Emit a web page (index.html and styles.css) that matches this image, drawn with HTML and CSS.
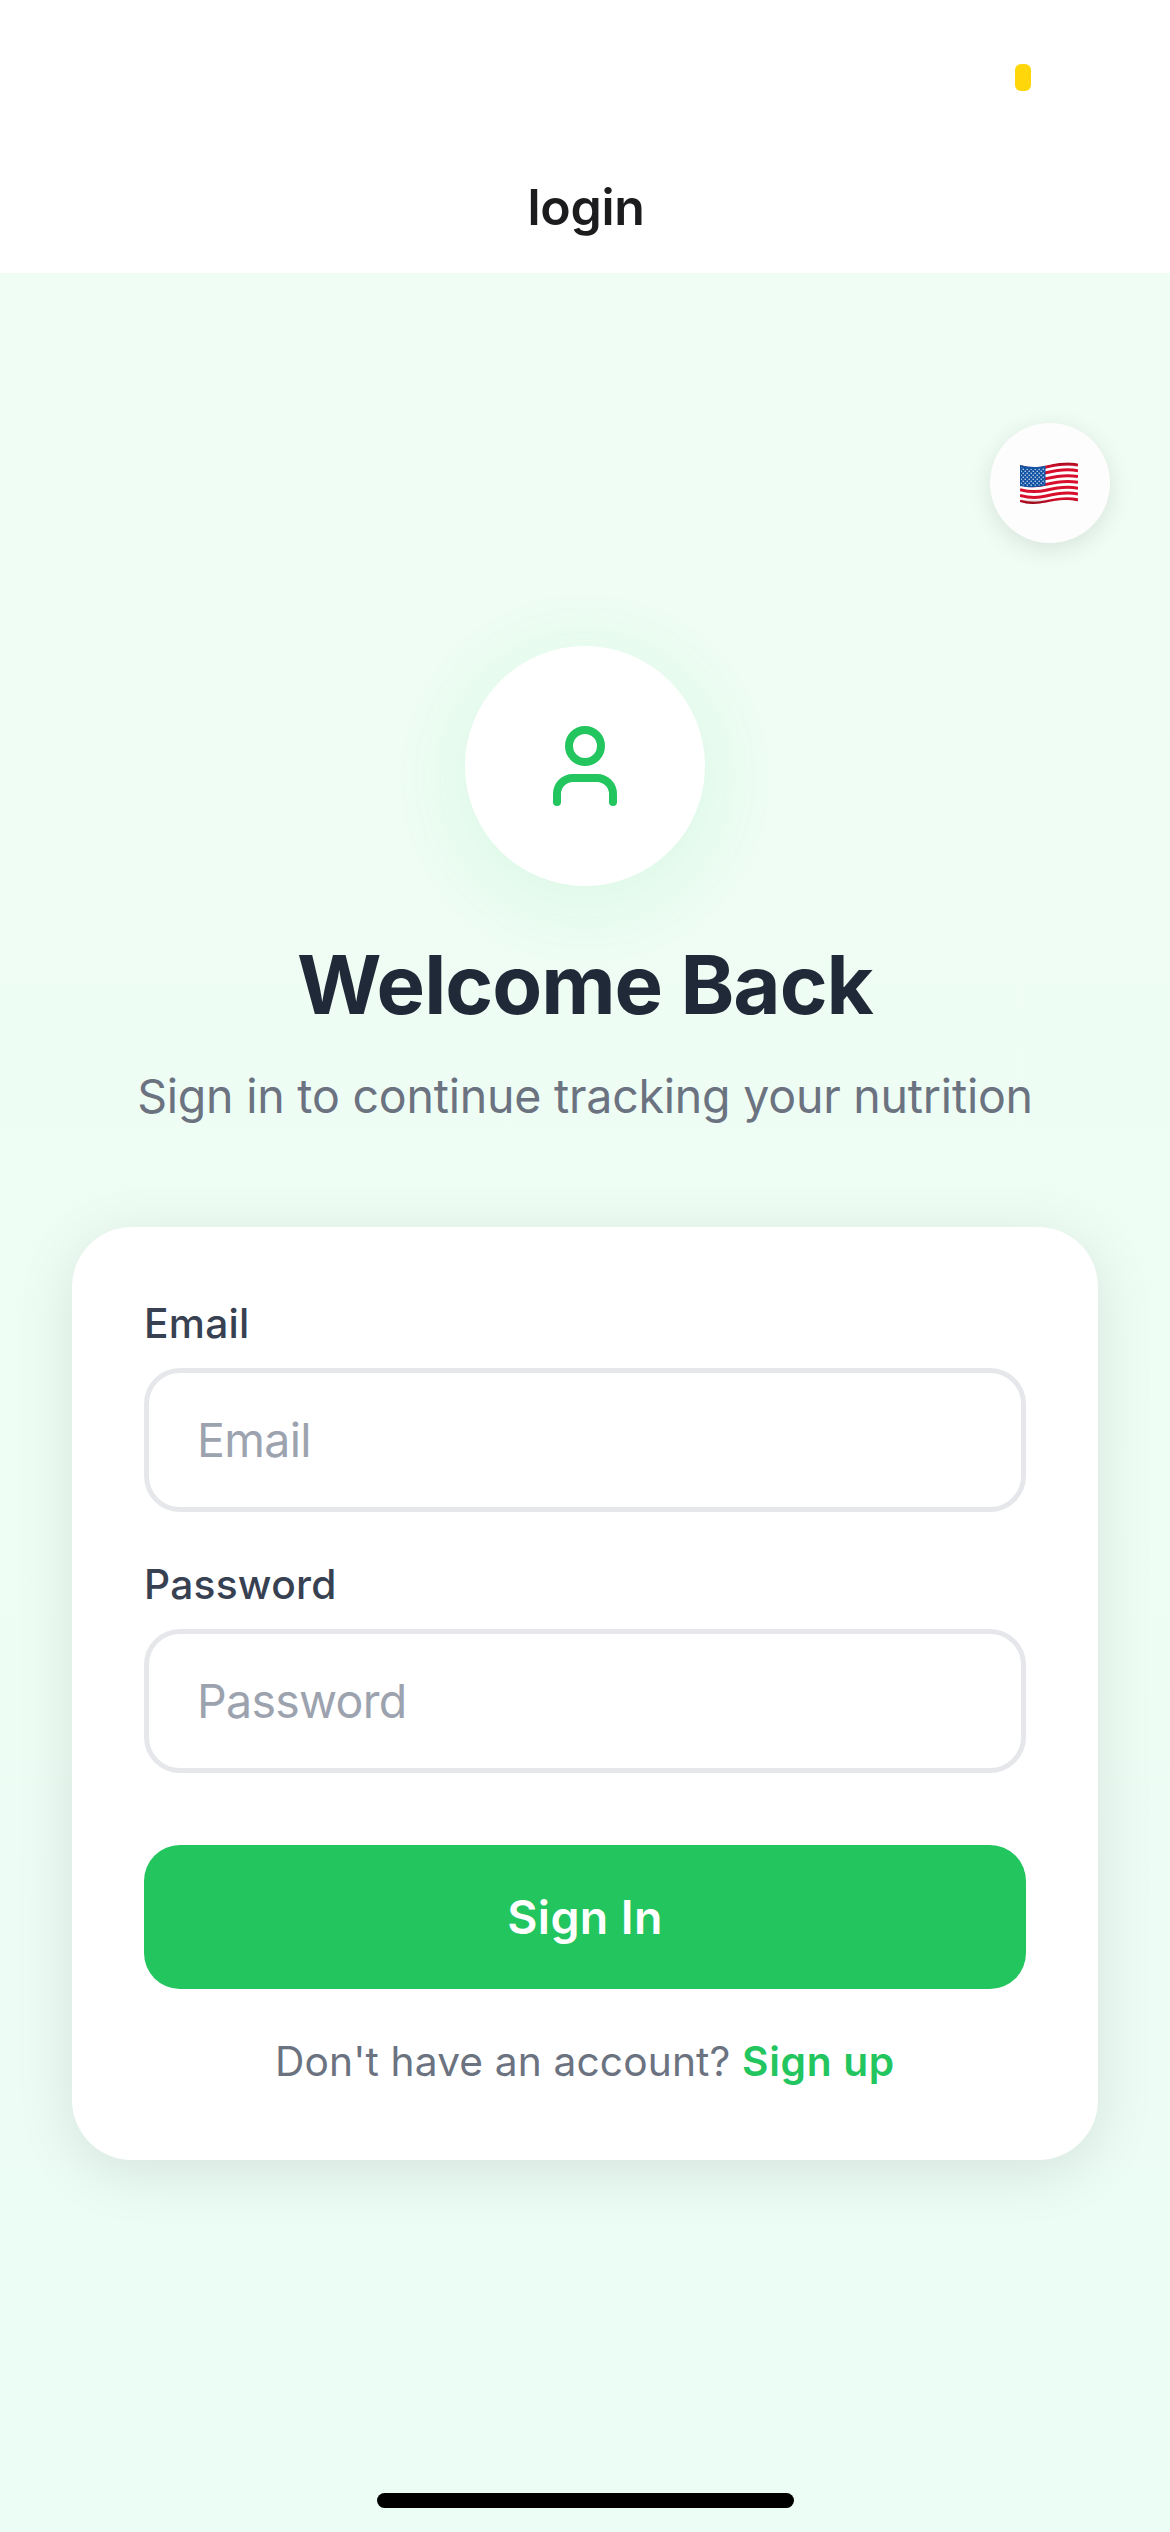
FILE: index.html
```html
<!DOCTYPE html>
<html lang="en">
<head>
<meta charset="utf-8">
<title>login</title>
<link rel="stylesheet" href="styles.css">
</head>
<body>
<div class="screen">
  <header class="header">
    <div class="status-bar"><span class="status-pill"></span></div>
    <h1 class="nav-title">login</h1>
  </header>
  <main class="content">
    <div class="toolbar">
      <button class="lang-button" type="button" aria-label="Language">
        <svg class="flag" viewBox="0 0 58 42">
          <defs>
            <clipPath id="wave"><path d="M0 3C8 5 16 6 26 3.500C38 .5 48 -.5 58 1.500V39.500C48 37 38 37.500 26 40.500C16 42.500 8 42.500 0 40Z"/></clipPath>
            <pattern id="stars" width="4" height="4" patternUnits="userSpaceOnUse"><circle cx="1.200" cy="1.200" r=".75"/><circle cx="3.200" cy="3.200" r=".75"/></pattern>
            <linearGradient id="shade" x1="0" y1="0" x2="0" y2="1"><stop offset="0" stop-color="#300" stop-opacity=".35"/><stop offset=".12" stop-color="#300" stop-opacity="0"/><stop offset=".88" stop-color="#300" stop-opacity="0"/><stop offset="1" stop-color="#300" stop-opacity=".45"/></linearGradient>
          </defs>
          <g clip-path="url(#wave)">
            <path class="flag-white" d="M0 0H58V42H0Z"/>
            <g class="flag-stripes">
              <path d="M0 4.500C8 6.500 16 7.500 26 5C38 2 48 1 58 3"/>
              <path d="M0 10.300C8 12.300 16 13.300 26 10.800C38 7.800 48 6.800 58 8.800"/>
              <path d="M0 16.100C8 18.100 16 19.100 26 16.600C38 13.600 48 12.600 58 14.600"/>
              <path d="M0 21.900C8 23.900 16 24.900 26 22.400C38 19.400 48 18.400 58 20.400"/>
              <path d="M0 27.700C8 29.700 16 30.700 26 28.200C38 25.200 48 24.200 58 26.200"/>
              <path d="M0 33.500C8 35.500 16 36.500 26 34C38 31 48 30 58 32"/>
              <path d="M0 39.300C8 41.300 16 42.300 26 39.800C38 36.800 48 35.800 58 37.800"/>
            </g>
            <path class="flag-canton" d="M0 0H25.500V23.600C16 26 8 25.500 0 24Z"/>
            <path class="flag-stars" d="M1 5.500C8 7.500 16 8 24.500 5.500V22.500C16 24.500 8 24 1 23Z"/>
            <path fill="url(#shade)" d="M0 0H58V42H0Z"/>
          </g>
        </svg>
      </button>
    </div>
    <section class="intro">
      <div class="avatar">
        <svg class="avatar-icon" viewBox="0 0 24 24"><path d="M19 21v-2a4 4 0 0 0-4-4H9a4 4 0 0 0-4 4v2"/><circle cx="12" cy="7" r="4"/></svg>
      </div>
      <h2 class="title">Welcome Back</h2>
      <p class="subtitle">Sign in to continue tracking your nutrition</p>
    </section>
    <form class="card">
      <label class="label" for="email">Email</label>
      <input class="input" id="email" type="email" placeholder="Email">
      <label class="label" for="password">Password</label>
      <input class="input" id="password" type="password" placeholder="Password">
      <button class="submit" type="button">Sign In</button>
      <p class="signup">Don't have an account? <a class="signup-link">Sign up</a></p>
    </form>
  </main>
  <div class="home-indicator"></div>
</div>
</body>
</html>
```
FILE: styles.css
```css
* {
  box-sizing: border-box;
  margin: 0;
}

body {
  font-family: Inter, "Liberation Sans", sans-serif;
  background: #fff;
}

.screen {
  display: flex;
  flex-direction: column;
  width: 1170px;
  height: 2532px;
  overflow: hidden;
  background: linear-gradient(#f0fdf4, #ecfdf5);
}

.header {
  height: 273px;
  background: #fff;
}

.status-bar {
  display: flex;
  justify-content: flex-end;
  height: 141px;
  padding: 64px 139px 0 0;
}

.status-pill {
  width: 16px;
  height: 27px;
  border-radius: 6px;
  background: #ffd60a;
}

.nav-title {
  padding-left: 2px;
  color: #1c1c1e;
  font-size: 50px;
  font-weight: 600;
  letter-spacing: -0.3px;
  line-height: 132px;
  text-align: center;
}

.content {
  flex: 1;
  padding: 150px 72px 0;
}

.toolbar {
  display: flex;
  justify-content: flex-end;
  margin-right: -12px;
}

.lang-button {
  display: flex;
  width: 120px;
  height: 120px;
  padding: 39px 0 0 30px;
  border: 0;
  border-radius: 50%;
  background: #fdfdfd;
  box-shadow: 0 6px 24px rgba(0, 0, 0, 0.1);
}

.flag {
  width: 58px;
  height: 42px;
}

.flag-white {
  fill: #fff;
}

.flag-stripes {
  fill: none;
  stroke: #d80f2c;
  stroke-width: 3;
}

.flag-canton {
  fill: #1253a4;
}

.flag-stars {
  fill: url(#stars);
}

#stars {
  fill: #dce8f6;
}

.intro {
  display: flex;
  flex-direction: column;
  align-items: center;
  margin-top: 103px;
}

.avatar {
  display: grid;
  place-items: center;
  width: 240px;
  height: 240px;
  border-radius: 50%;
  background: #fff;
  box-shadow: 0 12px 80px rgba(34, 197, 94, 0.11);
}

.avatar-icon {
  width: 96px;
  height: 96px;
  fill: none;
  stroke: #22c55e;
  stroke-width: 2;
  stroke-linecap: round;
  stroke-linejoin: round;
}

.title {
  margin-top: 48px;
  color: #1f2937;
  font-size: 81.5px;
  font-weight: 700;
  letter-spacing: -1px;
  line-height: 101px;
}

.subtitle {
  margin-top: 24px;
  color: #6b7280;
  font-size: 46.5px;
  letter-spacing: -0.22px;
  line-height: 74px;
  white-space: nowrap;
}

.card {
  display: flex;
  flex-direction: column;
  height: 933px;
  margin-top: 94px;
  padding: 72px;
  border-radius: 60px;
  background: #fff;
  box-shadow: 0 12px 60px rgba(0, 0, 0, 0.1);
}

.label {
  margin-bottom: 19px;
  color: #374151;
  font-size: 40.7px;
  font-weight: 500;
  letter-spacing: 0.25px;
  line-height: 50px;
}

.input {
  width: 100%;
  height: 144px;
  margin-bottom: 48px;
  padding: 0 48px;
  border: 5px solid #e5e7eb;
  border-radius: 36px;
  background: #fff;
  font-family: inherit;
  font-size: 46.5px;
  letter-spacing: -0.7px;
}

.input::placeholder {
  color: #9ca3af;
  opacity: 1;
}

.submit {
  height: 144px;
  margin-top: 24px;
  border: 0;
  border-radius: 36px;
  background: #22c55e;
  color: #fff;
  font-family: inherit;
  font-size: 46.5px;
  font-weight: 600;
  letter-spacing: 0.35px;
}

.signup {
  margin-top: 48px;
  color: #6b7280;
  font-size: 40.7px;
  letter-spacing: 0.13px;
  line-height: 50px;
  text-align: center;
  white-space: nowrap;
}

.signup-link {
  color: #22c55e;
  font-weight: 600;
  letter-spacing: 0.7px;
}

.home-indicator {
  width: 417px;
  height: 15px;
  margin: 0 auto 24px 377px;
  border-radius: 8px;
  background: #000;
}
```
